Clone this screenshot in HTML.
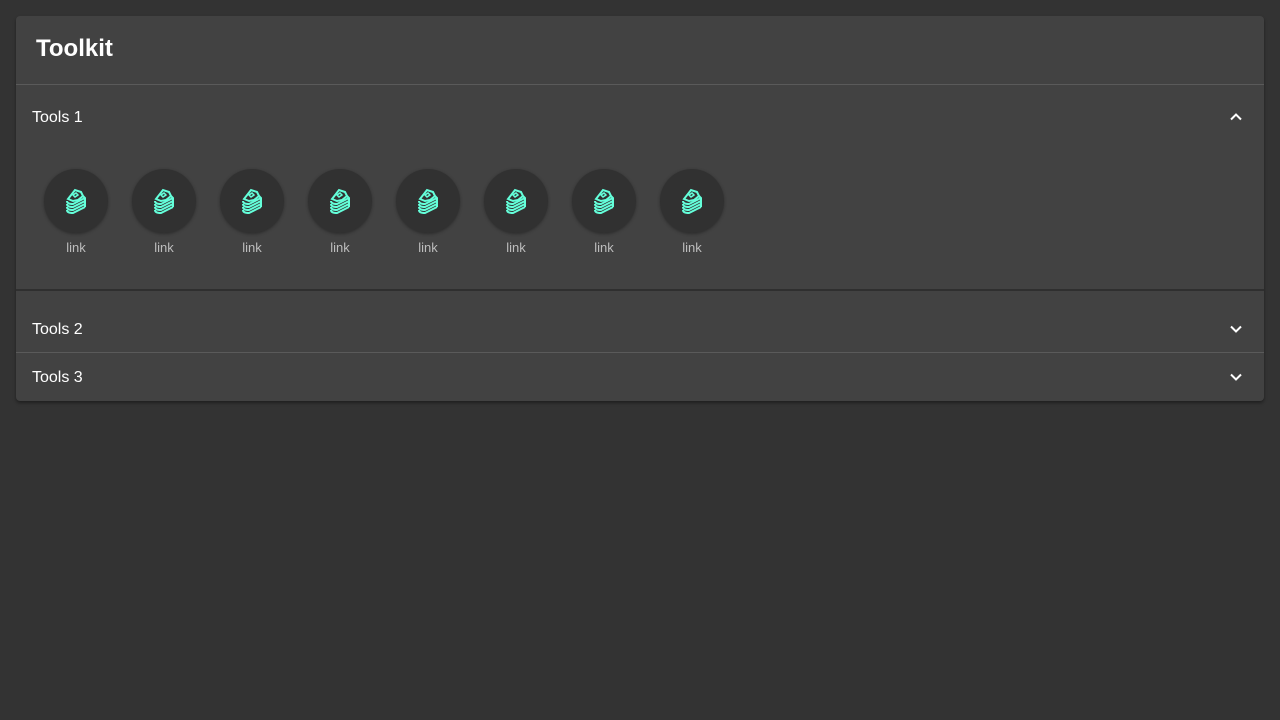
<!DOCTYPE html>
<html><head><style>
body{margin:0;background:#333;font-family:"Liberation Sans",sans-serif;width:1280px;height:720px;overflow:hidden}
.card{position:absolute;left:16px;top:16px;width:1248px;height:385px;background:#424242;border-radius:4px;box-shadow:0 2px 3px rgba(0,0,0,.4)}
h1{position:absolute;left:20px;top:19px;margin:0;font-size:24px;font-weight:bold;color:#fff}
.l{position:absolute;left:0;width:1248px;height:1px}
.t{position:absolute;left:16px;font-size:16px;color:#fff}
.ch{position:absolute;left:1212px;width:16px;height:16px}
.it{position:absolute;top:153px;width:64px;text-align:center}
.c{width:64px;height:64px;border-radius:50%;background:#313131;box-shadow:0 1px 3px rgba(0,0,0,.35);display:flex;align-items:center;justify-content:center}
.it span{display:block;margin-top:7px;font-size:13px;color:#bdbdbd}
</style></head><body>
<div class="card">
<h1>Toolkit</h1>
<div class="l" style="top:68px;background:#5a5a5a"></div>
<div class="t" style="top:93px">Tools 1</div>
<svg class="ch" style="top:93px" viewBox="0 0 16 16"><path d="M3 10.5 8 5.5 13 10.5" fill="none" stroke="#fff" stroke-width="2"/></svg>
<div class="it" style="left:28px"><div class="c">ICON</div><span>link</span></div>
<div class="l" style="top:273px;height:2px;background:#2f2f2f"></div>
<div class="t" style="top:305px">Tools 2</div>
<svg class="ch" style="top:305px" viewBox="0 0 16 16"><path d="M3 5.5 8 10.5 13 5.5" fill="none" stroke="#fff" stroke-width="2"/></svg>
<div class="l" style="top:336px;background:#5a5a5a"></div>
<div class="t" style="top:353px">Tools 3</div>
<svg class="ch" style="top:353px" viewBox="0 0 16 16"><path d="M3 5.5 8 10.5 13 5.5" fill="none" stroke="#fff" stroke-width="2"/></svg>
</div>
<script>
var svg='<svg width="24" height="30" viewBox="0 0 24 30"><g fill="none" stroke="#64ffda" stroke-width="2"><path d="M4 13 11 4 17 6 19 10 14 14 9 15Z"/><path d="M9 9 12 7 14 9 11 11Z" stroke-width="1.5"/><path d="M3 15Q3 18 9 18 L17 14 L21 12"/><path d="M3 18Q3 21 9 21 L17 17 L21 15"/><path d="M3 21Q3 24 9 24 L17 20 L21 18"/><path d="M3 24Q3 27 9 27 L17 23 L21 21"/><path d="M19 10 21 12 21 21"/></g></svg>';
var c=document.querySelector('.card'),f=document.querySelector('.it');f.querySelector('.c').innerHTML=svg;
for(var i=1;i<8;i++){var n=f.cloneNode(true);n.style.left=(28+88*i)+'px';c.appendChild(n);}
</script>
</body></html>
